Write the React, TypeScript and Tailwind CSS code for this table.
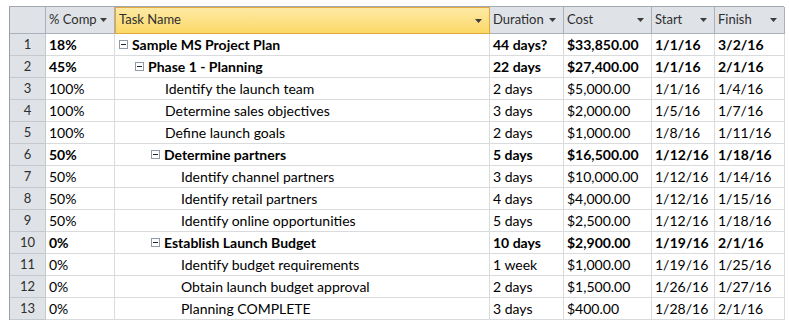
import React from "react";

type Row = {
  n: number;
  pct: string;
  name: string;
  level: number;
  summary: boolean;
  dur: string;
  cost: string;
  start: string;
  finish: string;
};

const rows: Row[] = [
  { n: 1, pct: "18%", name: "Sample MS Project Plan", level: 1, summary: true, dur: "44 days?", cost: "$33,850.00", start: "1/1/16", finish: "3/2/16" },
  { n: 2, pct: "45%", name: "Phase 1 - Planning", level: 2, summary: true, dur: "22 days", cost: "$27,400.00", start: "1/1/16", finish: "2/1/16" },
  { n: 3, pct: "100%", name: "Identify the launch team", level: 3, summary: false, dur: "2 days", cost: "$5,000.00", start: "1/1/16", finish: "1/4/16" },
  { n: 4, pct: "100%", name: "Determine sales objectives", level: 3, summary: false, dur: "3 days", cost: "$2,000.00", start: "1/5/16", finish: "1/7/16" },
  { n: 5, pct: "100%", name: "Define launch goals", level: 3, summary: false, dur: "2 days", cost: "$1,000.00", start: "1/8/16", finish: "1/11/16" },
  { n: 6, pct: "50%", name: "Determine partners", level: 3, summary: true, dur: "5 days", cost: "$16,500.00", start: "1/12/16", finish: "1/18/16" },
  { n: 7, pct: "50%", name: "Identify channel partners", level: 4, summary: false, dur: "3 days", cost: "$10,000.00", start: "1/12/16", finish: "1/14/16" },
  { n: 8, pct: "50%", name: "Identify retail partners", level: 4, summary: false, dur: "4 days", cost: "$4,000.00", start: "1/12/16", finish: "1/15/16" },
  { n: 9, pct: "50%", name: "Identify online opportunities", level: 4, summary: false, dur: "5 days", cost: "$2,500.00", start: "1/12/16", finish: "1/18/16" },
  { n: 10, pct: "0%", name: "Establish Launch Budget", level: 3, summary: true, dur: "10 days", cost: "$2,900.00", start: "1/19/16", finish: "2/1/16" },
  { n: 11, pct: "0%", name: "Identify budget requirements", level: 4, summary: false, dur: "1 week", cost: "$1,000.00", start: "1/19/16", finish: "1/25/16" },
  { n: 12, pct: "0%", name: "Obtain launch budget approval", level: 4, summary: false, dur: "2 days", cost: "$1,500.00", start: "1/26/16", finish: "1/27/16" },
  { n: 13, pct: "0%", name: "Planning COMPLETE", level: 4, summary: false, dur: "3 days", cost: "$400.00", start: "1/28/16", finish: "2/1/16" },
];

const Arrow = () => (
  <svg width="7" height="4" viewBox="0 0 7 4" className="shrink-0">
    <path d="M0 0 H7 L3.5 4 Z" fill="#3c3c3c" />
  </svg>
);

const Minus = () => (
  <span className="inline-flex w-[9px] h-[9px] border border-[#8e9aa6] bg-white items-center justify-center shrink-0 mr-[4px]">
    <span className="block w-[5px] h-[1px] bg-[#222]" />
  </span>
);

const indentFor: Record<number, string> = {
  1: "pl-[4px]",
  2: "pl-[20px]",
  3: "pl-[36px]",
  4: "pl-[52px]",
};

const leafIndentFor: Record<number, string> = {
  1: "pl-[17px]",
  2: "pl-[33px]",
  3: "pl-[50px]",
  4: "pl-[66px]",
};

export default function App() {
  const headCell =
    "h-[27px] border-r border-b border-[#aab1ba] bg-[#dfe3e8] flex items-start pt-[1px] pl-[3px] pr-[7px] text-[13px] leading-[18px] text-[#2e2e2e]";
  const cell = "h-[22px] border-r border-b border-[#d9dbdd] flex items-center pl-[3px] whitespace-nowrap overflow-hidden";
  return (
    <div
      className="w-[789px] h-[327px] bg-white text-[14px] text-black"
      style={{ fontFamily: "Lato, 'Open Sans', sans-serif" }}
    >
      <div className="pt-[6px] pl-[9px]">
        <div className="grid grid-cols-[36px_69px_375px_74px_88px_63px_70px] w-[775px] border-t border-l border-[#a3a9b0] border-l-[#9aa0a8]">
          <div className={headCell} />
          <div className={headCell + " justify-between"}>
            <span className="pt-[2px]">% Comp</span>
            <span className="mt-[10px]"><Arrow /></span>
          </div>
          <div className="h-[27px] border border-[#e0a73c] bg-gradient-to-b from-[#fde9a4] to-[#fcd864] flex items-start justify-between pt-[2px] pl-[3px] pr-[7px] text-[13px] leading-[18px] text-[#2e2e2e]">
            <span>Task Name</span>
            <span className="mt-[9px]"><Arrow /></span>
          </div>
          <div className={headCell + " justify-between"}>
            <span className="pt-[2px]">Duration</span>
            <span className="mt-[10px]"><Arrow /></span>
          </div>
          <div className={headCell + " justify-between"}>
            <span className="pt-[2px]">Cost</span>
            <span className="mt-[10px]"><Arrow /></span>
          </div>
          <div className={headCell + " justify-between"}>
            <span className="pt-[2px]">Start</span>
            <span className="mt-[10px]"><Arrow /></span>
          </div>
          <div className={headCell + " justify-between"}>
            <span className="pt-[2px]">Finish</span>
            <span className="mt-[10px]"><Arrow /></span>
          </div>

          {rows.map((r) => {
            const w = r.summary ? " font-bold" : "";
            return (
              <React.Fragment key={r.n}>
                <div className="h-[22px] border-r border-b border-[#c4c9cf] bg-[#dfe3e8] flex items-center justify-center text-[13px] text-[#2e2e2e]">
                  {r.n}
                </div>
                <div className={cell + w}>{r.pct}</div>
                <div
                  className={
                    "h-[22px] border-r border-b border-[#d9dbdd] flex items-center whitespace-nowrap overflow-hidden " +
                    (r.summary ? indentFor[r.level] : leafIndentFor[r.level]) +
                    w
                  }
                >
                  {r.summary && <Minus />}
                  <span>{r.name}</span>
                </div>
                <div className={cell + w}>{r.dur}</div>
                <div className={cell + w}>{r.cost}</div>
                <div className={cell + w}>{r.start}</div>
                <div className={cell + w}>{r.finish}</div>
              </React.Fragment>
            );
          })}
        </div>
      </div>
    </div>
  );
}
